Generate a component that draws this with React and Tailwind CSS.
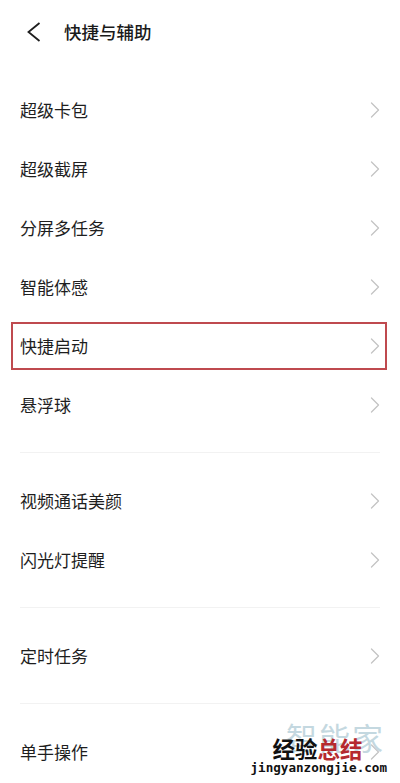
import { ChevronRight } from 'lucide-react';

const font = { fontFamily: '"Noto Sans CJK SC", "Noto Sans", sans-serif' };

const groups = [
    ['超级卡包', '超级截屏', '分屏多任务', '智能体感', '快捷启动', '悬浮球'],
    ['视频通话美颜', '闪光灯提醒'],
    ['定时任务'],
    ['单手操作'],
];

function Row({ label, marked }) {
    return (
        <div className="relative h-[59px] flex items-center justify-between pl-5 pr-[11px]">
            <span className="text-[17px] text-[#1e1e1e]">{label}</span>
            <ChevronRight size={28} strokeWidth={1.1} className="text-[#c4c4c4]" />
            {marked && (
                <div className="absolute top-[6px] bottom-[5px] left-[11px] right-[13px] border-2 border-[#bf4a4f]" />
            )}
        </div>
    );
}

export default function App() {
    return (
        <div className="relative w-[400px] h-[783px] bg-white overflow-hidden" style={font}>
            <header className="h-16 flex items-center pl-[27px]">
                <svg width="14" height="20" viewBox="0 0 14 20" fill="none">
                    <path d="M12.5 1 L1.5 10 L12.5 19" stroke="#1e1e1e" strokeWidth="1.8" strokeLinejoin="miter" />
                </svg>
                <h1 className="ml-[23px] text-[17.5px] font-medium text-[#1a1a1a]">快捷与辅助</h1>
            </header>

            <div className="pt-4">
                {groups.map((items, gi) => (
                    <div key={gi}>
                        {gi > 0 && <div className="mx-5 my-[18px] h-px bg-[#f2f2f2]" />}
                        {items.map((label) => (
                            <Row key={label} label={label} marked={label === '快捷启动'} />
                        ))}
                    </div>
                ))}
            </div>

            {/* watermark stamped over the bottom-right corner */}
            <div className="absolute right-[13px] bottom-[8px] grid whitespace-nowrap leading-none">
                <span className="col-start-1 row-start-1 justify-self-end pr-[2px] text-[31px] leading-none text-[#c4d8e0] tracking-[2px]">智能家</span>
                <div className="col-start-1 row-start-1 flex flex-col items-start pt-[16px]">
                    <div className="pl-[22px] text-[22.5px] font-bold leading-none">
                        <span className="text-[#111]">经验</span>
                        <span className="text-[#b52a2f]">总结</span>
                    </div>
                    <span
                        className="mt-[3px] text-[12.6px] font-bold leading-none text-[#111]"
                        style={{ fontFamily: '"DejaVu Sans Mono", monospace' }}
                    >
                        jingyanzongjie.com
                    </span>
                </div>
            </div>
        </div>
    );
}
